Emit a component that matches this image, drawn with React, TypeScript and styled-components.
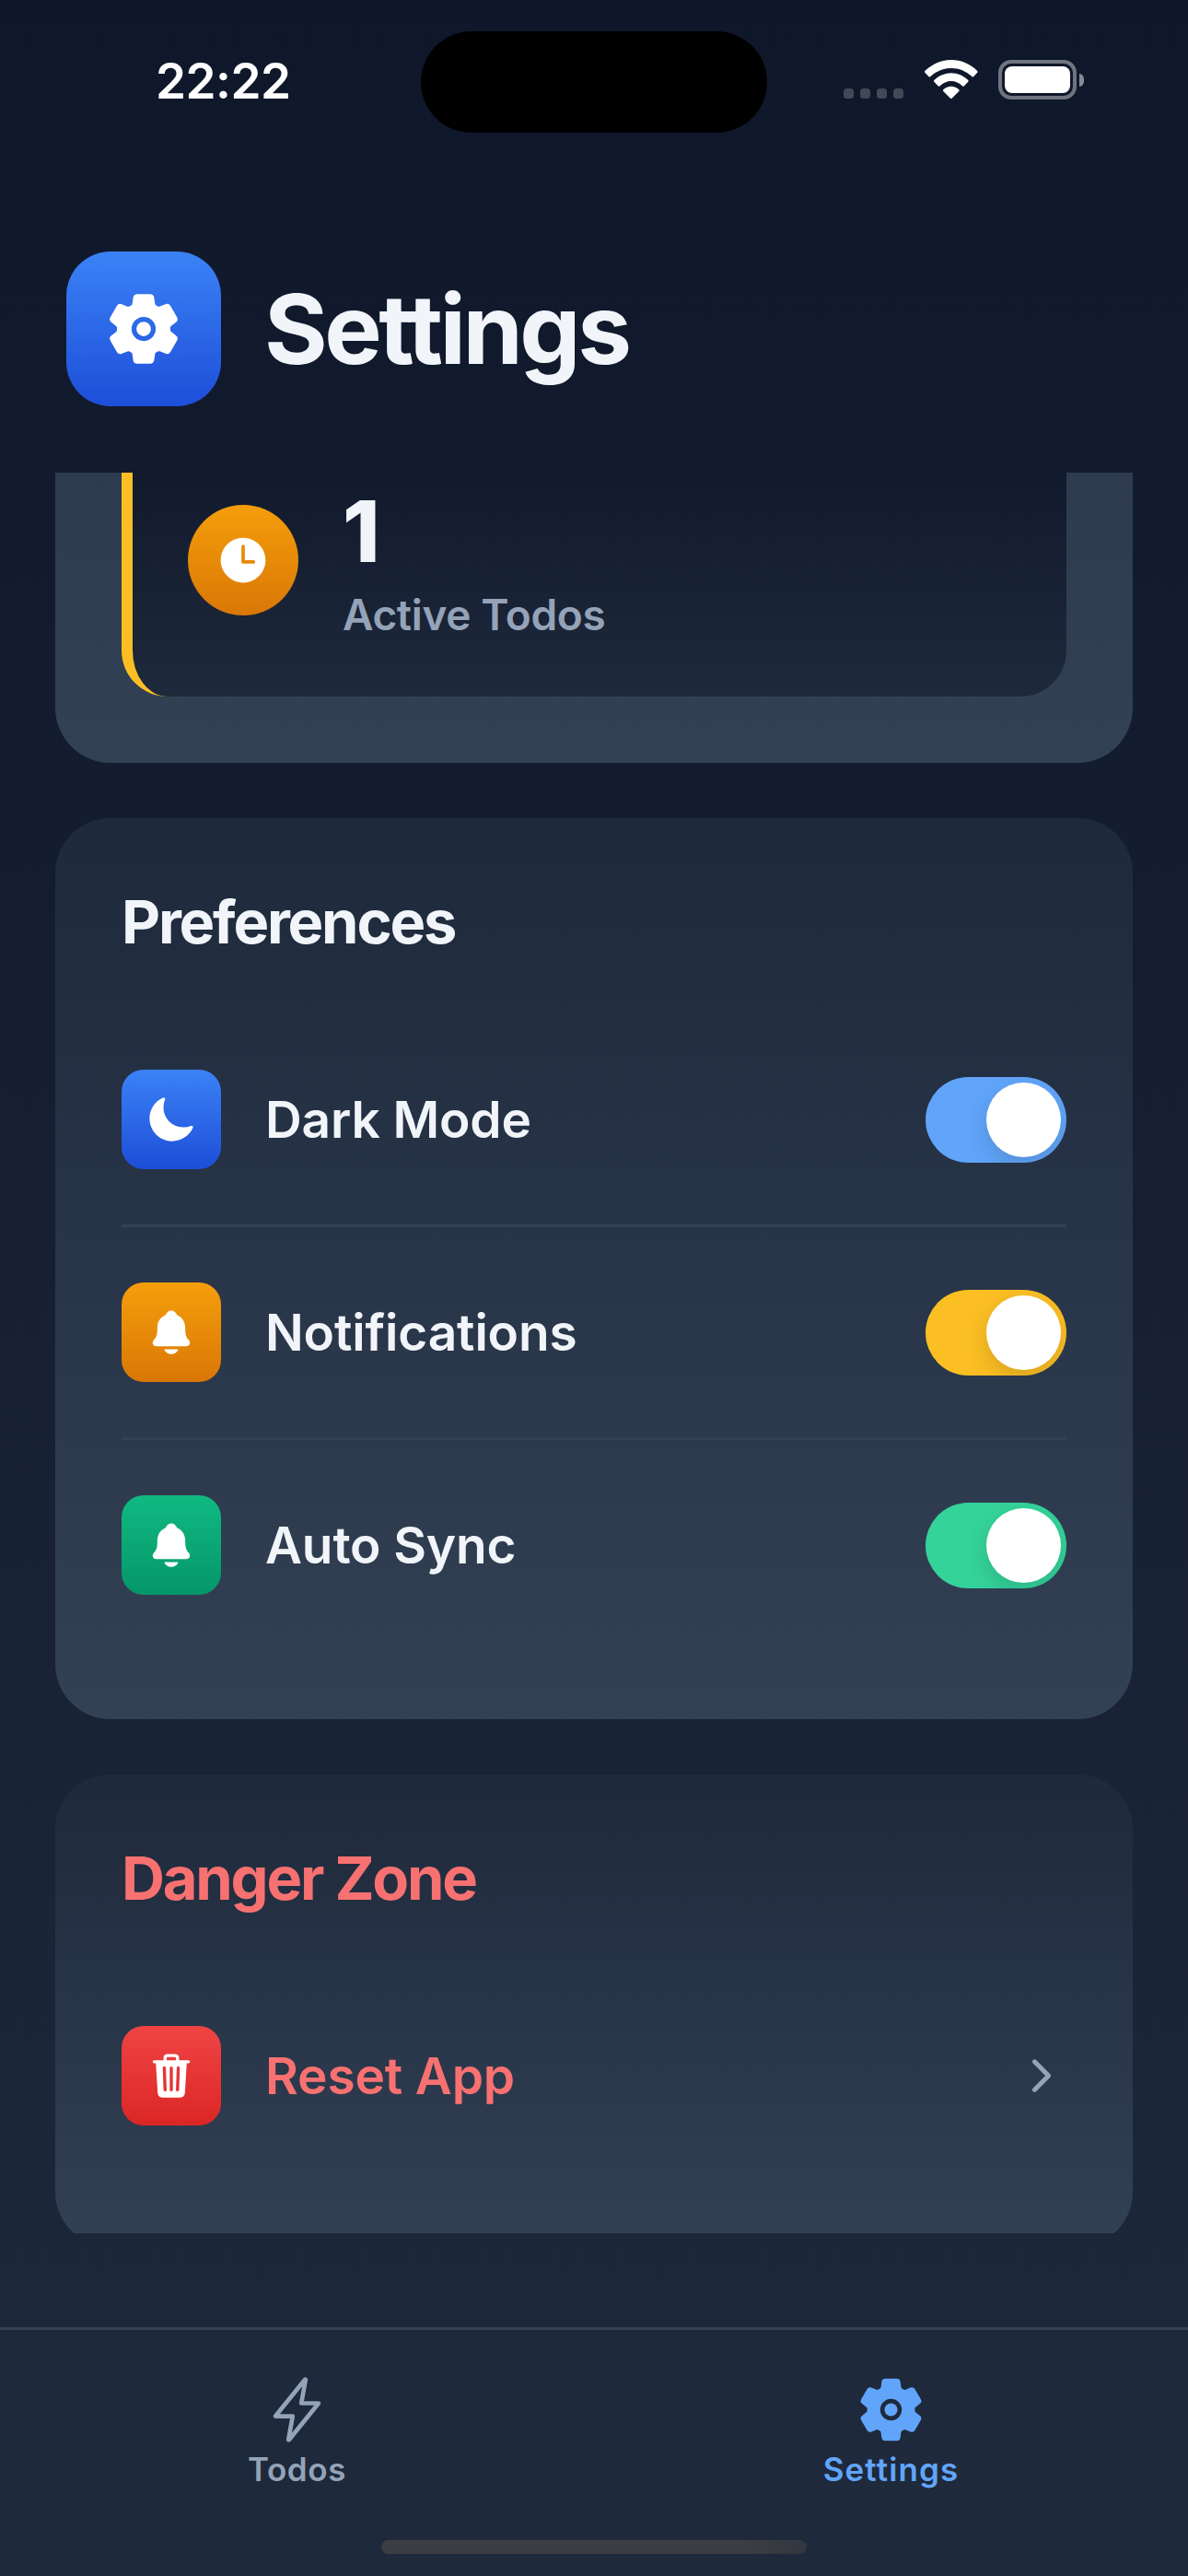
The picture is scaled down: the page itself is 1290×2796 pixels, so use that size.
import React, { useState } from "react";
import styled, { createGlobalStyle } from "styled-components";
import type { IconType } from "react-icons";
import {
  IoChevronForward,
  IoFlashOutline,
  IoMoon,
  IoNotifications,
  IoSettings,
  IoTime,
  IoTrash,
} from "react-icons/io5";

const GlobalStyle = createGlobalStyle`
  * { box-sizing: border-box; }
  body { margin: 0; background: #0f172a; }
`;

const gradients = {
  blue: "#3b82f6, #1d4ed8",
  amber: "#f59e0b, #d97706",
  green: "#10b981, #059669",
  red: "#ef4444, #dc2626",
};
type Tone = keyof typeof gradients;

const Screen = styled.div`
  display: flex;
  flex-direction: column;
  width: 1290px;
  height: 2796px;
  overflow: hidden;
  background: linear-gradient(#0f172a, #1e293b);
  color: #f1f5f9;
  font-family: Inter, "Liberation Sans", sans-serif;
`;

const StatusBar = styled.header`
  display: grid;
  grid-template-columns: 457px 376px 457px;
  height: 177px;
  padding-top: 34px;
`;

const Clock = styled.time`
  padding-left: 169px;
  color: #fff;
  font-size: 53px;
  font-weight: 600;
  letter-spacing: -0.5px;
  line-height: 108px;
`;

const Island = styled.div`
  height: 110px;
  border-radius: 55px;
  background: #000;
`;

const Indicators = styled.div`
  display: flex;
  align-items: flex-start;
  padding: 31px 0 0 83px;
`;

const Signal = styled.div`
  display: flex;
  gap: 7px;
  width: 88px;
  padding-top: 31px;
`;

const SignalDot = styled.span`
  width: 11px;
  height: 11px;
  border-radius: 3.5px;
  background: #434857;
`;

const Wifi = styled.svg`
  display: block;
  width: 57.6px;
  height: 42.4px;
  fill: #fff;
`;

const Battery = styled.div`
  display: flex;
  align-items: center;
  gap: 3px;
  margin-left: 22.6px;
`;

const BatteryShell = styled.div`
  display: flex;
  width: 85px;
  height: 43px;
  padding: 3px;
  border: 4px solid #6f7480;
  border-radius: 14px;
`;

const BatteryLevel = styled.div`
  flex: 1;
  border-radius: 8px;
  background: #fff;
`;

const BatteryCap = styled.div`
  width: 5px;
  height: 14px;
  border-radius: 0 6px 6px 0 / 0 7px 7px 0;
  background: #878b95;
`;

const TitleBar = styled.div`
  display: flex;
  align-items: center;
  gap: 47px;
  height: 336px;
  padding: 24px 72px 0;
`;

const IconTile = styled.div<{ $tone: Tone; $size: number; $radius: number; $icon: number }>`
  display: flex;
  flex: none;
  align-items: center;
  justify-content: center;
  width: ${(p) => p.$size}px;
  height: ${(p) => p.$size}px;
  border-radius: ${(p) => p.$radius}px;
  background: linear-gradient(${(p) => gradients[p.$tone]});
  color: #fff;

  svg {
    width: ${(p) => p.$icon}px;
    height: ${(p) => p.$icon}px;
  }
`;

const PageTitle = styled.h1`
  margin: 0;
  font-size: 105px;
  font-weight: 700;
  letter-spacing: -3.5px;
  line-height: 126px;
`;

const ScrollArea = styled.main`
  display: flex;
  flex-direction: column;
  gap: 60px;
  height: 1911px;
  padding: 0 60px;
  overflow: hidden;
`;

const Card = styled.section`
  flex: none;
  padding: 72px;
  border-radius: 60px;
  background: linear-gradient(#1e293b, #334155);
`;

const StatsCard = styled(Card)`
  display: flex;
  flex-direction: column;
  justify-content: flex-end;
  height: 1280px;
  margin-top: -965px;
`;

const Stat = styled.div`
  display: flex;
  align-items: center;
  gap: 48px;
  height: 296px;
  padding: 0 60px;
  border-left: 12px solid #fbbf24;
  border-radius: 50px;
  background: linear-gradient(#0f172a, #1e293b);
`;

const StatValue = styled.div`
  margin-bottom: 5px;
  font-size: 92px;
  font-weight: 850;
  line-height: 114px;
`;

const StatLabel = styled.div`
  color: #94a3b8;
  font-size: 46px;
  font-weight: 600;
  letter-spacing: -0.35px;
  line-height: 57px;
`;

const CardTitle = styled.h2<{ $danger?: boolean }>`
  margin: 0 0 60px;
  color: ${(p) => (p.$danger ? "#f87171" : "#f1f5f9")};
  font-size: 65px;
  font-weight: 700;
  letter-spacing: -2.2px;
  line-height: 81px;
`;

const Row = styled.div<{ $divider?: boolean }>`
  display: flex;
  align-items: center;
  gap: 48px;
  padding: 60px 0;
  border-bottom: ${(p) => (p.$divider ? "3px solid #334155" : "0")};
`;

const RowLabel = styled.span<{ $danger?: boolean }>`
  flex: 1;
  color: ${(p) => (p.$danger ? "#f87171" : "#f1f5f9")};
  font-size: 55px;
  font-weight: 600;
  letter-spacing: -0.15px;
  line-height: 68px;
`;

const Track = styled.button<{ $color: string; $on: boolean }>`
  display: flex;
  justify-content: ${(p) => (p.$on ? "flex-end" : "flex-start")};
  width: 153px;
  height: 93px;
  padding: 6px;
  overflow: hidden;
  border: 0;
  border-radius: 47px;
  background: ${(p) => (p.$on ? p.$color : "#475569")};
`;

const Knob = styled.span`
  width: 81px;
  height: 81px;
  border-radius: 50%;
  background: #fff;
  box-shadow: 0 9px 24px rgba(0, 0, 0, 0.14);
`;

const Chevron = styled(IoChevronForward)`
  width: 54px;
  height: 54px;
  color: #94a3b8;
`;

const TabBar = styled.nav`
  display: flex;
  height: 270px;
  margin-top: 102px;
  padding-top: 49px;
  border-top: 3px solid #334155;
  background: #1e293b;
`;

const Tab = styled.div<{ $active?: boolean }>`
  display: flex;
  flex: 1;
  flex-direction: column;
  align-items: center;
  color: ${(p) => (p.$active ? "#60a5fa" : "#94a3b8")};
  font-size: 35px;
  font-weight: 600;
  letter-spacing: ${(p) => (p.$active ? 1.1 : 0.6)}px;
  line-height: 44px;

  svg {
    width: 75px;
    height: 75px;
    margin-bottom: 5px;
  }
`;

const HomeIndicator = styled.div`
  position: absolute;
  top: 2757px;
  left: 414px;
  width: 462px;
  height: 15px;
  border-radius: 8px;
  background: linear-gradient(90deg, #3c3e43 85%, #32363f);
`;

function Toggle({ color, label }: { color: string; label: string }) {
  const [on, setOn] = useState(true);
  return (
    <Track
      role="switch"
      aria-checked={on}
      aria-label={label}
      $color={color}
      $on={on}
      onClick={() => setOn(!on)}
    >
      <Knob />
    </Track>
  );
}

const preferences: { label: string; tone: Tone; color: string; Icon: IconType }[] = [
  { label: "Dark Mode", tone: "blue", color: "#60a5fa", Icon: IoMoon },
  { label: "Notifications", tone: "amber", color: "#fbbf24", Icon: IoNotifications },
  { label: "Auto Sync", tone: "green", color: "#34d399", Icon: IoNotifications },
];

export default function App() {
  return (
    <Screen>
      <GlobalStyle />
      <StatusBar>
        <Clock>22:22</Clock>
        <Island />
        <Indicators>
          <Signal>
            <SignalDot />
            <SignalDot />
            <SignalDot />
            <SignalDot />
          </Signal>
          <Wifi viewBox="371 105 173 127">
            <path d="M457.5 105C424 105 394 119 372 141Q370 144 372 146L384 159Q387 162 390 159C408 142 432 132 457.5 132S507 142 525 159Q528 162 531 159L543 146Q545 144 543 141C521 119 491 105 457.5 105Z" />
            <path d="M457.5 148C436 148 417 157 402 171Q400 174 402 176L415 190Q418 193 421 190C431 180 444 174 457.5 174S484 180 494 190Q497 193 500 190L513 176Q515 174 513 171C498 157 479 148 457.5 148Z" />
            <path d="M457.5 191C448 191 439 195 432 202Q430 205 432 207L455 230Q457.5 232 460 230L483 207Q485 205 483 202C476 195 467 191 457.5 191Z" />
          </Wifi>
          <Battery>
            <BatteryShell>
              <BatteryLevel />
            </BatteryShell>
            <BatteryCap />
          </Battery>
        </Indicators>
      </StatusBar>

      <TitleBar>
        <IconTile $tone="blue" $size={168} $radius={48} $icon={84}>
          <IoSettings />
        </IconTile>
        <PageTitle>Settings</PageTitle>
      </TitleBar>

      <ScrollArea>
        <StatsCard>
          <Stat>
            <IconTile $tone="amber" $size={120} $radius={60} $icon={60}>
              <IoTime />
            </IconTile>
            <div>
              <StatValue>1</StatValue>
              <StatLabel>Active Todos</StatLabel>
            </div>
          </Stat>
        </StatsCard>

        <Card>
          <CardTitle>Preferences</CardTitle>
          {preferences.map(({ label, tone, color, Icon }) => (
            <Row key={label} $divider>
              <IconTile $tone={tone} $size={108} $radius={24} $icon={54}>
                <Icon />
              </IconTile>
              <RowLabel>{label}</RowLabel>
              <Toggle color={color} label={label} />
            </Row>
          ))}
        </Card>

        <Card>
          <CardTitle $danger>Danger Zone</CardTitle>
          <Row>
            <IconTile $tone="red" $size={108} $radius={24} $icon={54}>
              <IoTrash />
            </IconTile>
            <RowLabel $danger>Reset App</RowLabel>
            <Chevron />
          </Row>
        </Card>
      </ScrollArea>

      <TabBar>
        <Tab>
          <IoFlashOutline />
          Todos
        </Tab>
        <Tab $active>
          <IoSettings />
          Settings
        </Tab>
      </TabBar>
      <HomeIndicator />
    </Screen>
  );
}
